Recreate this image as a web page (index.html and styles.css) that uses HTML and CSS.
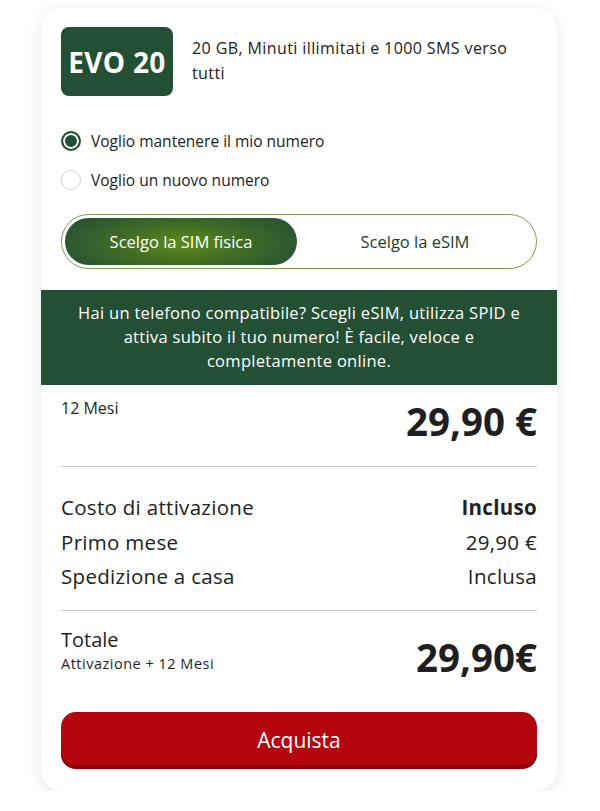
FILE: index.html
```html
<!DOCTYPE html>
<html lang="it">
<head>
<meta charset="utf-8">
<link rel="stylesheet" href="styles.css">
</head>
<body>
<div class="card">
  <div class="head">
    <div class="badge">EVO 20</div>
    <div class="desc">20 GB, Minuti illimitati e 1000 SMS verso tutti</div>
  </div>
  <div class="radios">
    <div class="radio-row"><span class="radio checked"></span><span>Voglio mantenere il mio numero</span></div>
    <div class="radio-row"><span class="radio"></span><span>Voglio un nuovo numero</span></div>
  </div>
  <div class="toggle">
    <div class="opt active">Scelgo la SIM fisica</div>
    <div class="opt">Scelgo la eSIM</div>
  </div>
  <div class="banner">Hai un telefono compatibile? Scegli eSIM, utilizza SPID e<br>attiva subito il tuo numero! È facile, veloce e<br>completamente online.</div>
  <div class="body">
    <div class="months">
      <span class="months-label">12 Mesi</span>
      <span class="big-price">29,90 €</span>
    </div>
    <div class="divider"></div>
    <div class="rows">
      <div class="row"><span>Costo di attivazione</span><span class="bold">Incluso</span></div>
      <div class="row"><span>Primo mese</span><span>29,90 €</span></div>
      <div class="row"><span>Spedizione a casa</span><span>Inclusa</span></div>
    </div>
    <div class="divider"></div>
    <div class="total">
      <div class="total-left">
        <div class="total-title">Totale</div>
        <div class="total-sub">Attivazione + 12 Mesi</div>
      </div>
      <div class="total-price">29,90€</div>
    </div>
    <button class="buy">Acquista</button>
  </div>
</div>
</body>
</html>
```
FILE: styles.css
```css
* { box-sizing: border-box; }
html, body { margin: 0; padding: 0; background: #ffffff; }
body {
  font-family: "Open Sans", "Liberation Sans", sans-serif;
  color: #1f1f1f;
  padding-top: 8px;
}
.card {
  width: 516px;
  margin-left: 41px;
  background: #fff;
  border-radius: 22px;
  box-shadow: 0 3px 16px rgba(0,0,0,0.10);
  padding-bottom: 22px;
  overflow: hidden;
}
.head {
  display: flex;
  padding: 19px 20px 0 20px;
  gap: 19px;
}
.badge {
  width: 112px;
  height: 69px;
  flex: none;
  background: #234f35;
  border-radius: 8px;
  color: #fff;
  font-weight: 700;
  font-size: 28px;
  letter-spacing: 0.3px;
  display: flex;
  align-items: center;
  justify-content: center;
}
.desc {
  margin-top: 9px;
  font-size: 16px;
  letter-spacing: 0.4px;
  line-height: 25px;
  color: #222;
}
.radios {
  padding: 34px 20px 0 20px;
  display: flex;
  flex-direction: column;
  gap: 17px;
}
.radio-row {
  display: flex;
  align-items: center;
  gap: 10px;
  font-size: 15.5px;
  height: 22px;
  color: #222;
}
.radio {
  width: 20px;
  height: 20px;
  border-radius: 50%;
  border: 1.5px solid #d0d0d0;
  flex: none;
}
.radio.checked {
  border: 2px solid #234f35;
  background: #234f35;
  box-shadow: inset 0 0 0 2px #fff;
}
.toggle {
  margin: 23px 20px 0 20px;
  height: 55px;
  border: 1.5px solid #7d9a4e;
  border-radius: 28px;
  padding: 3px;
  display: flex;
}
.opt {
  flex: 1;
  display: flex;
  align-items: center;
  justify-content: center;
  font-size: 16.5px;
  color: #1f3b2b;
  border-radius: 24px;
}
.opt.active {
  flex: none;
  width: 232px;
  color: #fff;
  background: radial-gradient(ellipse 60% 90% at 50% 55%, #5e8b1a 0%, #3f6c25 45%, #234f35 100%);
}
.banner {
  margin-top: 21px;
  background: #234f35;
  color: #fff;
  text-align: center;
  font-size: 16.5px;
  letter-spacing: 0.3px;
  line-height: 24px;
  padding: 11px 8px 12px 8px;
}
.body {
  padding: 0 20px;
}
.months {
  display: flex;
  justify-content: space-between;
  align-items: flex-start;
  padding-top: 13px;
  height: 81px;
}
.months-label {
  font-size: 16px;
  line-height: 20px;
}
.big-price {
  font-size: 38.5px;
  font-weight: 700;
  line-height: 44px;
  margin-top: 1px;
}
.divider {
  height: 1px;
  background: #cfcfcf;
}
.rows {
  padding: 23px 0 16px 0;
}
.row {
  display: flex;
  justify-content: space-between;
  font-size: 20.5px;
  letter-spacing: 0.3px;
  line-height: 34.5px;
  color: #222;
}
.bold { font-weight: 700; }
.total {
  display: flex;
  justify-content: space-between;
  align-items: flex-start;
  padding-top: 17px;
}
.total-title {
  font-size: 20px;
  line-height: 24px;
}
.total-sub {
  font-size: 14.5px;
  letter-spacing: 0.5px;
  line-height: 20px;
  margin-top: 2px;
}
.total-price {
  font-size: 38.5px;
  font-weight: 700;
  line-height: 44px;
  margin-top: 7px;
}
.buy {
  display: block;
  width: 100%;
  height: 57px;
  margin-top: 33px;
  border: none;
  border-radius: 15px;
  background: #b5050f;
  box-shadow: inset 0 -4px 0 #8c0208;
  color: #fff;
  font-family: inherit;
  font-size: 21px;
}
```
